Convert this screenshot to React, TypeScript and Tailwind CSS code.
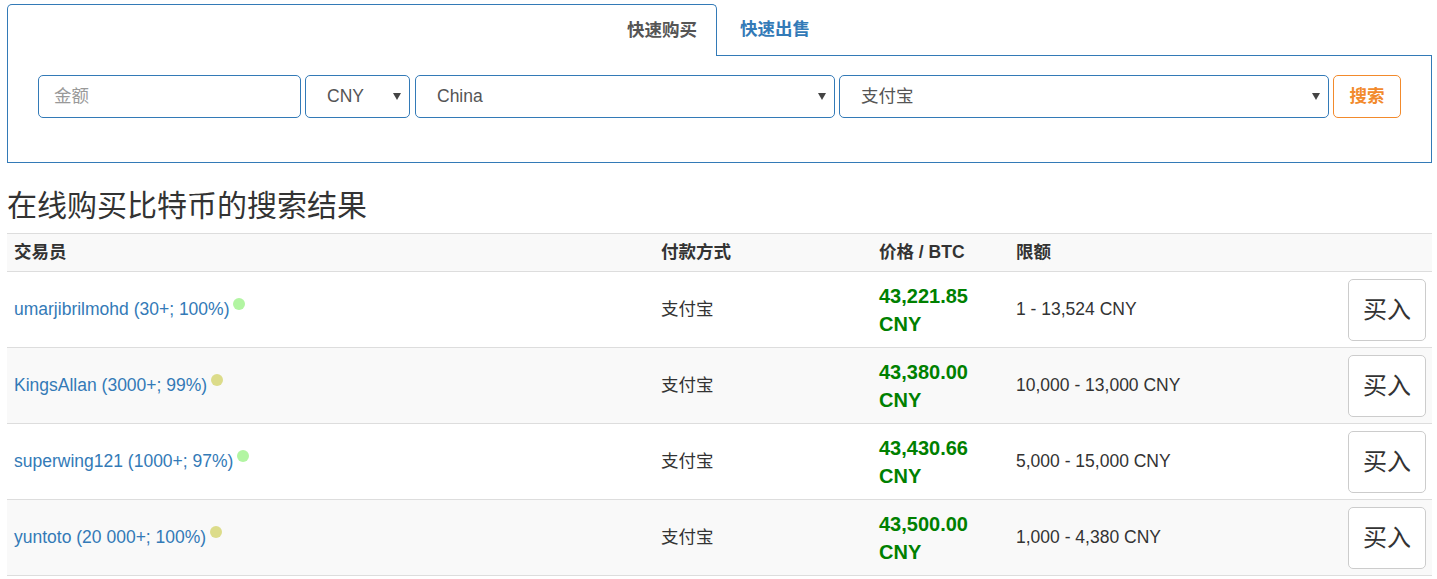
import type { ReactNode } from 'react'

interface Offer {
  readonly trader: string
  readonly stats: string
  readonly online: 'green' | 'yellow'
  readonly payment: string
  readonly price: string
  readonly limit: string
}

const OFFERS: readonly Offer[] = [
  {
    trader: 'umarjibrilmohd',
    stats: '(30+; 100%)',
    online: 'green',
    payment: '支付宝',
    price: '43,221.85',
    limit: '1 - 13,524 CNY',
  },
  {
    trader: 'KingsAllan',
    stats: '(3000+; 99%)',
    online: 'yellow',
    payment: '支付宝',
    price: '43,380.00',
    limit: '10,000 - 13,000 CNY',
  },
  {
    trader: 'superwing121',
    stats: '(1000+; 97%)',
    online: 'green',
    payment: '支付宝',
    price: '43,430.66',
    limit: '5,000 - 15,000 CNY',
  },
  {
    trader: 'yuntoto',
    stats: '(20 000+; 100%)',
    online: 'yellow',
    payment: '支付宝',
    price: '43,500.00',
    limit: '1,000 - 4,380 CNY',
  },
]

const COLUMNS = 'grid grid-cols-[647px_218px_137px_332px_91px]'

function Caret() {
  return (
    <svg width="8" height="7" viewBox="0 0 8 7" className="shrink-0">
      <polygon points="0,0 8,0 4,7" fill="#444" />
    </svg>
  )
}

function FakeSelect({ width, children }: { width: string; children: ReactNode }) {
  return (
    <div
      className={`${width} flex h-[43px] items-center justify-between rounded-[5px] border border-[#337ab7] bg-white pl-[21px] pr-[8px] text-[17.5px] text-[#555]`}
    >
      <span>{children}</span>
      <Caret />
    </div>
  )
}

export default function App() {
  return (
    <div className="min-h-[579px] bg-white pt-[4px] pl-[7px] pr-[5px] font-['Liberation_Sans','Noto_Sans_CJK_SC',sans-serif] text-[17.5px] text-[#333]">
      {/* quick buy / sell tabs */}
      <div className="flex h-[52px]">
        <div className="flex w-[710px] items-center justify-end rounded-t-[5px] border border-b-0 border-[#337ab7] pr-[19px] font-bold text-[#555]">
          快速购买
        </div>
        <div className="flex flex-1 items-center border-b border-[#337ab7] pl-[23px] font-bold text-[#337ab7]">
          快速出售
        </div>
      </div>
      <div className="h-[107px] border border-t-0 border-[#337ab7] pt-[19px] pl-[30px]">
        <div className="flex gap-[4px]">
          <div className="flex h-[43px] w-[263px] items-center rounded-[5px] border border-[#337ab7] pl-[15px] text-[#999]">
            金额
          </div>
          <FakeSelect width="w-[105px]">CNY</FakeSelect>
          <div className="ml-[1px]">
            <FakeSelect width="w-[420px]">China</FakeSelect>
          </div>
          <FakeSelect width="w-[490px]">支付宝</FakeSelect>
          <button
            type="button"
            className="flex h-[43px] w-[68px] items-center justify-center rounded-[5px] border border-[#f28a2c] bg-white font-bold text-[#f28a2c]"
          >
            搜索
          </button>
        </div>
      </div>

      <h3 className="mt-[26px] mb-[11px] h-[33px] text-[30px] leading-[33px] font-normal text-[#333]">
        在线购买比特币的搜索结果
      </h3>

      {/* results */}
      <div className="border-b border-[#ddd]">
        <div className={`${COLUMNS} h-[38px] items-center border-t border-[#ddd] bg-[#f9f9f9] font-bold`}>
          <div className="pl-[7px]">交易员</div>
          <div className="pl-[7px]">付款方式</div>
          <div className="pl-[7px]">价格 / BTC</div>
          <div className="pl-[7px]">限额</div>
          <div />
        </div>
        {OFFERS.map((offer, index) => (
          <div
            key={offer.trader}
            className={`${COLUMNS} h-[76px] items-center border-t border-[#ddd] ${
              index % 2 === 1 ? 'bg-[#f9f9f9]' : 'bg-white'
            }`}
          >
            <div className="pl-[7px]">
              <span className="inline-flex items-start leading-[25px]">
                <a href="#" className="text-[#337ab7]">
                  {offer.trader} {offer.stats}
                </a>
                <span
                  className={`ml-[4px] mt-[1px] inline-block size-[12px] shrink-0 rounded-full ${
                    offer.online === 'green' ? 'bg-[#b2f5a2]' : 'bg-[#dcdc8a]'
                  }`}
                />
              </span>
            </div>
            <div className="pl-[7px]">{offer.payment}</div>
            <div className="pl-[7px] text-[20px] leading-[28px] font-bold text-[#008000]">
              <div>{offer.price}</div>
              <div>CNY</div>
            </div>
            <div className="pl-[7px]">{offer.limit}</div>
            <div className="pl-[7px]">
              <button
                type="button"
                className="flex h-[62px] w-[78px] items-center justify-center rounded-[5px] border border-[#ccc] bg-white text-[24px] text-[#333]"
              >
                买入
              </button>
            </div>
          </div>
        ))}
      </div>
    </div>
  )
}
